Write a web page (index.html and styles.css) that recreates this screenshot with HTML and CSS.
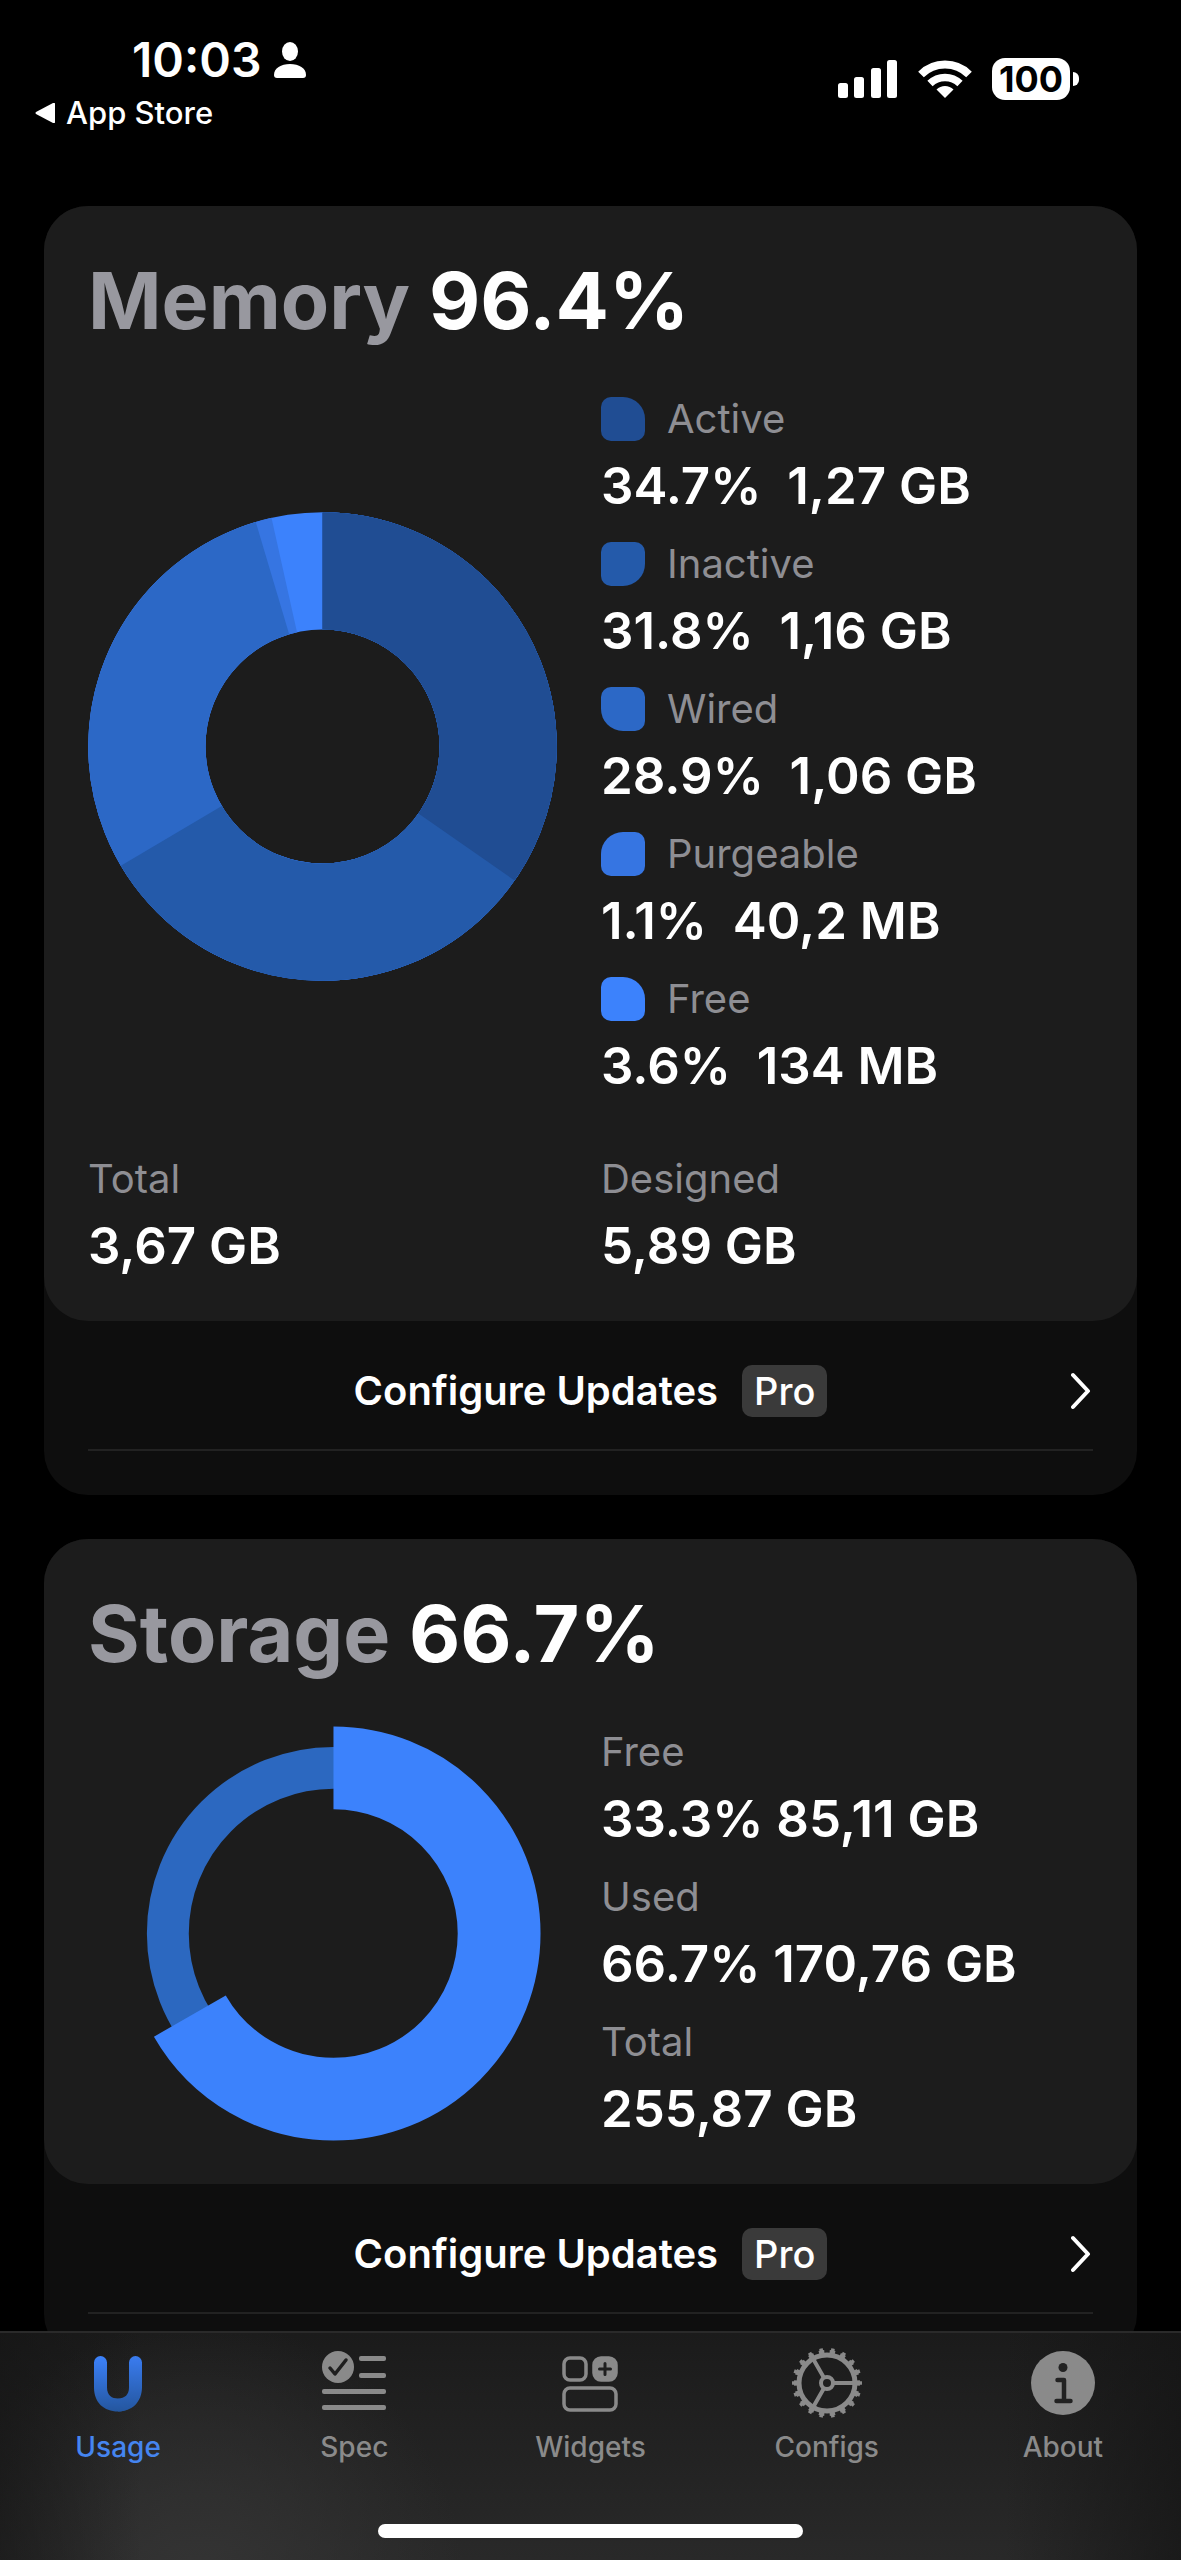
FILE: index.html
```
<!DOCTYPE html>
<html lang="en">
<head>
<meta charset="UTF-8">
<meta name="viewport" content="width=device-width, initial-scale=1.0">
<title>Usage</title>
<link rel="stylesheet" href="styles.css">
</head>
<body>

<header class="status">
  <div class="status-left">
    <div class="clock">
      <span>10:03</span>
      <svg width="34" height="36" viewBox="0 0 34 36" fill="#fff">
        <ellipse cx="17" cy="9.500" rx="8" ry="9.500"/>
        <path d="M1 33C1 26 8 22 17 22s16 4 16 11c0 2-1 3-3 3H4c-2 0-3-1-3-3z"/>
      </svg>
    </div>
    <a href="#" class="back">
      <svg width="20" height="20" viewBox="0 0 20 20" fill="#fff"><path d="M1 9L18 0q2-1 2 1v18q0 2-2 1L1 11q-1-1 0-2z"/></svg>
      App Store
    </a>
  </div>
  <div class="status-right">
    <svg width="60" height="38" viewBox="0 0 60 38" fill="#fff">
      <rect x="0" y="23" width="10" height="15" rx="2.500"/>
      <rect x="16" y="17" width="10" height="21" rx="2.500"/>
      <rect x="33" y="8" width="10" height="30" rx="2.500"/>
      <rect x="49" y="0" width="10" height="38" rx="2.500"/>
    </svg>
    <svg width="54" height="38" viewBox="0 0 54 38">
      <path d="M3 14.500a34 34 0 0 1 48 0" fill="none" stroke="#fff" stroke-width="8"/>
      <path d="M12 23.500a21.500 21.500 0 0 1 30 0" fill="none" stroke="#fff" stroke-width="7.500"/>
      <path d="M27 38l-8.500-8.500a12 12 0 0 1 17 0z" fill="#fff"/>
    </svg>
    <div class="battery">
      <span class="level">100</span>
      <span class="tip"></span>
    </div>
  </div>
</header>

<main class="content">
  <section class="group">
    <div class="card">
      <h2><span>Memory</span> 96.4%</h2>
      <div class="columns">
        <svg class="chart" viewBox="0 0 470 470">
          <g fill="none" stroke-width="117.500" transform="rotate(-90 235 235)">
            <circle cx="235" cy="235" r="176" pathLength="1000" stroke="#3c82fc"/>
            <circle cx="235" cy="235" r="176" pathLength="1000" stroke="#3675e2" stroke-dasharray="965 1000"/>
            <circle cx="235" cy="235" r="176" pathLength="1000" stroke="#2c68c6" stroke-dasharray="954 1000"/>
            <circle cx="235" cy="235" r="176" pathLength="1000" stroke="#245aaa" stroke-dasharray="665 1000"/>
            <circle cx="235" cy="235" r="176" pathLength="1000" stroke="#204d93" stroke-dasharray="347 1000"/>
          </g>
        </svg>
        <dl class="stats">
          <div>
            <dt><i class="dot active"></i>Active</dt>
            <dd>34.7%&nbsp; 1,27 GB</dd>
          </div>
          <div>
            <dt><i class="dot inactive"></i>Inactive</dt>
            <dd>31.8%&nbsp; 1,16 GB</dd>
          </div>
          <div>
            <dt><i class="dot wired"></i>Wired</dt>
            <dd>28.9%&nbsp; 1,06 GB</dd>
          </div>
          <div>
            <dt><i class="dot purgeable"></i>Purgeable</dt>
            <dd>1.1%&nbsp; 40,2 MB</dd>
          </div>
          <div>
            <dt><i class="dot free"></i>Free</dt>
            <dd>3.6%&nbsp; 134 MB</dd>
          </div>
        </dl>
      </div>
      <dl class="columns totals">
        <div>
          <dt>Total</dt>
          <dd>3,67 GB</dd>
        </div>
        <div>
          <dt>Designed</dt>
          <dd>5,89 GB</dd>
        </div>
      </dl>
    </div>
    <button class="configure">
      <span class="label">Configure Updates</span>
      <span class="pro">Pro</span>
      <svg class="chevron" width="22" height="38" viewBox="0 0 22 38"><path d="M2 3l15 16L2 35" fill="none" stroke="#fff" stroke-width="4" stroke-linecap="round" stroke-linejoin="round"/></svg>
    </button>
  </section>

  <section class="group">
    <div class="card">
      <h2><span>Storage</span> 66.7%</h2>
      <div class="columns">
        <svg class="chart" viewBox="0 0 470 416">
          <g fill="none" transform="rotate(-90 246 208)">
            <circle cx="246" cy="208" r="166" stroke="#2c68c0" stroke-width="42"/>
            <circle cx="246" cy="208" r="166" pathLength="1000" stroke="#3c82fc" stroke-width="83" stroke-dasharray="667 1000"/>
          </g>
        </svg>
        <dl class="stats">
          <div>
            <dt>Free</dt>
            <dd>33.3% 85,11 GB</dd>
          </div>
          <div>
            <dt>Used</dt>
            <dd>66.7% 170,76 GB</dd>
          </div>
          <div>
            <dt>Total</dt>
            <dd>255,87 GB</dd>
          </div>
        </dl>
      </div>
    </div>
    <button class="configure">
      <span class="label">Configure Updates</span>
      <span class="pro">Pro</span>
      <svg class="chevron" width="22" height="38" viewBox="0 0 22 38"><path d="M2 3l15 16L2 35" fill="none" stroke="#fff" stroke-width="4" stroke-linecap="round" stroke-linejoin="round"/></svg>
    </button>
  </section>
</main>

<footer class="tabbar">
  <nav class="tabs">
    <a href="#" class="tab current">
      <svg width="72" height="72" viewBox="0 0 72 72" fill="none">
        <defs>
          <linearGradient id="u" x1="0" y1="0" x2="0" y2="1">
            <stop offset="0" stop-color="#3c82fc"/>
            <stop offset="1" stop-color="#24569e"/>
          </linearGradient>
          <linearGradient id="u2" x1="0" y1="0" x2="0" y2="1">
            <stop offset="0" stop-color="#3a7cf0"/>
            <stop offset="1" stop-color="#24569e"/>
          </linearGradient>
        </defs>
        <path d="M47 15.500a6.500 6.500 0 0 1 13 0V40c0 15-10 24.500-24 24.500V51.500c7 0 11-4 11-11z" fill="url(#u2)"/>
        <path d="M12 15.500a6.500 6.500 0 0 1 13 0v25c0 8 5 11 11 11 3 4 7 8 12 9q-5 4-12 4c-14 0-24-9-24-24z" fill="url(#u)"/>
      </svg>
      Usage
    </a>
    <a href="#" class="tab">
      <svg width="72" height="72" viewBox="0 0 72 72" fill="#8a8a8a">
        <circle cx="20" cy="20" r="16"/>
        <path d="M12 21l5 6 11-14" fill="none" stroke="#1f1f1f" stroke-width="3.500" stroke-linecap="round" stroke-linejoin="round"/>
        <rect x="41" y="9" width="27" height="5" rx="2"/>
        <rect x="41" y="26" width="27" height="5" rx="2"/>
        <rect x="4" y="42" width="64" height="5" rx="2"/>
        <rect x="4" y="58" width="64" height="5" rx="2"/>
      </svg>
      Spec
    </a>
    <a href="#" class="tab">
      <svg width="72" height="72" viewBox="0 0 72 72" fill="none" stroke="#8a8a8a" stroke-width="3.500">
        <rect x="10" y="11" width="22" height="22" rx="6"/>
        <rect x="10" y="41" width="52" height="22" rx="6"/>
        <rect x="40" y="11" width="22" height="22" rx="7" fill="#8a8a8a"/>
        <path d="M51 16.500v11M45.500 22h11" stroke="#1f1f1f" stroke-width="3" stroke-linecap="round"/>
      </svg>
      Widgets
    </a>
    <a href="#" class="tab">
      <svg width="72" height="72" viewBox="0 0 72 72" fill="none" stroke="#8a8a8a">
        <circle cx="36" cy="36" r="28" stroke-width="5"/>
        <circle cx="36" cy="36" r="31" stroke-width="4" pathLength="360" stroke-dasharray="10 10" stroke-dashoffset="5"/>
        <circle cx="36" cy="36" r="33.500" stroke-width="3" pathLength="360" stroke-dasharray="6 14" stroke-dashoffset="3"/>
        <circle cx="36" cy="36" r="6" stroke-width="4"/>
        <path d="M43 36h20M32.500 30L22.500 12.500M32.500 42L22.500 59.500" stroke-width="4"/>
      </svg>
      Configs
    </a>
    <a href="#" class="tab">
      <svg width="72" height="72" viewBox="0 0 72 72" fill="none">
        <circle cx="36" cy="36" r="32" fill="#8a8a8a"/>
        <circle cx="36" cy="20.500" r="4.500" fill="#222"/>
        <path d="M30.500 33H37v20.500M29.500 54h14" stroke="#222" stroke-width="4.500" stroke-linecap="round" stroke-linejoin="round"/>
      </svg>
      About
    </a>
  </nav>
  <div class="home"></div>
</footer>

</body>
</html>
```
FILE: styles.css
```
* {
  box-sizing: border-box;
}

body {
  margin: 0;
  height: 100vh;
  display: flex;
  flex-direction: column;
  background: #000;
  color: #fff;
  font-family: Inter, "Liberation Sans", sans-serif;
}

a {
  color: inherit;
  text-decoration: none;
}

svg {
  display: block;
}

/* status bar */

.status {
  display: flex;
  justify-content: space-between;
  flex: none;
  height: 206px;
  padding: 30px 102px 0 35px;
}

.clock {
  display: flex;
  align-items: center;
  gap: 12px;
  padding-left: 97px;
  font-size: 48px;
  line-height: 60px;
  font-weight: 600;
}

.back {
  display: flex;
  align-items: center;
  gap: 11px;
  margin-top: 3px;
  font-size: 31px;
  line-height: 40px;
  font-weight: 500;
}

.status-right {
  display: flex;
  align-items: center;
  gap: 20px;
  height: 98px;
}

.battery {
  display: flex;
  align-items: center;
  gap: 3px;
}

.level {
  width: 78px;
  border-radius: 13px;
  background: #fff;
  color: #000;
  font-size: 36px;
  line-height: 42px;
  font-weight: 700;
  text-align: center;
}

.tip {
  width: 6px;
  height: 14px;
  border-radius: 0 7px 7px 0;
  background: #fff;
}

/* cards */

.content {
  flex: 1;
  min-height: 0;
  overflow: hidden;
  padding: 0 44px;
}

.group {
  margin-bottom: 44px;
  padding-bottom: 44px;
  border-radius: 44px;
  background: #0e0e0e;
}

.card {
  padding: 44px 44px 38px;
  border-radius: 44px;
  background: #1c1c1c;
}

h2 {
  margin: 0 0 39px;
  font-size: 79px;
  line-height: 100px;
  font-weight: 700;
}

h2 span {
  color: #98989f;
}

.columns {
  display: grid;
  grid-template-columns: 469fr 492fr;
  column-gap: 44px;
  align-items: center;
}

.chart {
  width: 100%;
}

dl {
  margin: 0;
}

.stats {
  display: grid;
  gap: 11px;
}

.totals {
  margin-top: 46px;
}

dt {
  display: flex;
  align-items: center;
  gap: 22px;
  color: #8e8e93;
  font-size: 40px;
  line-height: 60px;
}

dd {
  margin: 0;
  font-size: 51px;
  line-height: 74px;
  font-weight: 600;
  white-space: nowrap;
}

.dot {
  width: 44px;
  height: 44px;
  border-radius: 10px;
}

.active {
  border-top-right-radius: 22px;
  background: #204d93;
}

.inactive {
  border-bottom-right-radius: 22px;
  background: #245aaa;
}

.wired {
  border-bottom-left-radius: 22px;
  background: #2c68c6;
}

.purgeable {
  border-top-left-radius: 22px;
  background: #3675e2;
}

.free {
  border-top-right-radius: 22px;
  background: #3c82fc;
}

.configure {
  display: grid;
  grid-template-columns: 1fr auto auto 1fr;
  align-items: center;
  width: calc(100% - 88px);
  margin: 0 44px;
  padding: 44px 0 32px;
  border: 0;
  border-bottom: 2px solid #222;
  background: none;
  color: #fff;
  font-family: inherit;
  font-size: 40px;
  line-height: 52px;
  font-weight: 600;
}

.label {
  grid-column: 2;
}

.pro {
  margin-left: 24px;
  padding: 0 12px;
  border-radius: 10px;
  background: #3a3a3a;
  font-size: 38px;
  font-weight: 500;
}

.chevron {
  justify-self: end;
}

/* tab bar */

.tabbar {
  flex: none;
  border-top: 2px solid #2a2a2a;
  background:
    linear-gradient(to right, rgba(20, 20, 20, 0.6), transparent 12%, transparent 85%, rgba(20, 20, 20, 0.7)),
    radial-gradient(circle at 17% 110%, #343434, transparent 26%),
    linear-gradient(#1b1b1b, #292929);
}

.tabs {
  display: grid;
  grid-template-columns: repeat(5, 1fr);
  padding-top: 14px;
}

.tab {
  display: flex;
  flex-direction: column;
  align-items: center;
  gap: 10px;
  color: #8a8a8a;
  font-size: 28px;
  line-height: 36px;
  font-weight: 500;
}

.current {
  color: #4585f0;
}

.home {
  width: 36%;
  height: 14px;
  margin: 59px auto 22px;
  border-radius: 7px;
  background: #fff;
}
```
